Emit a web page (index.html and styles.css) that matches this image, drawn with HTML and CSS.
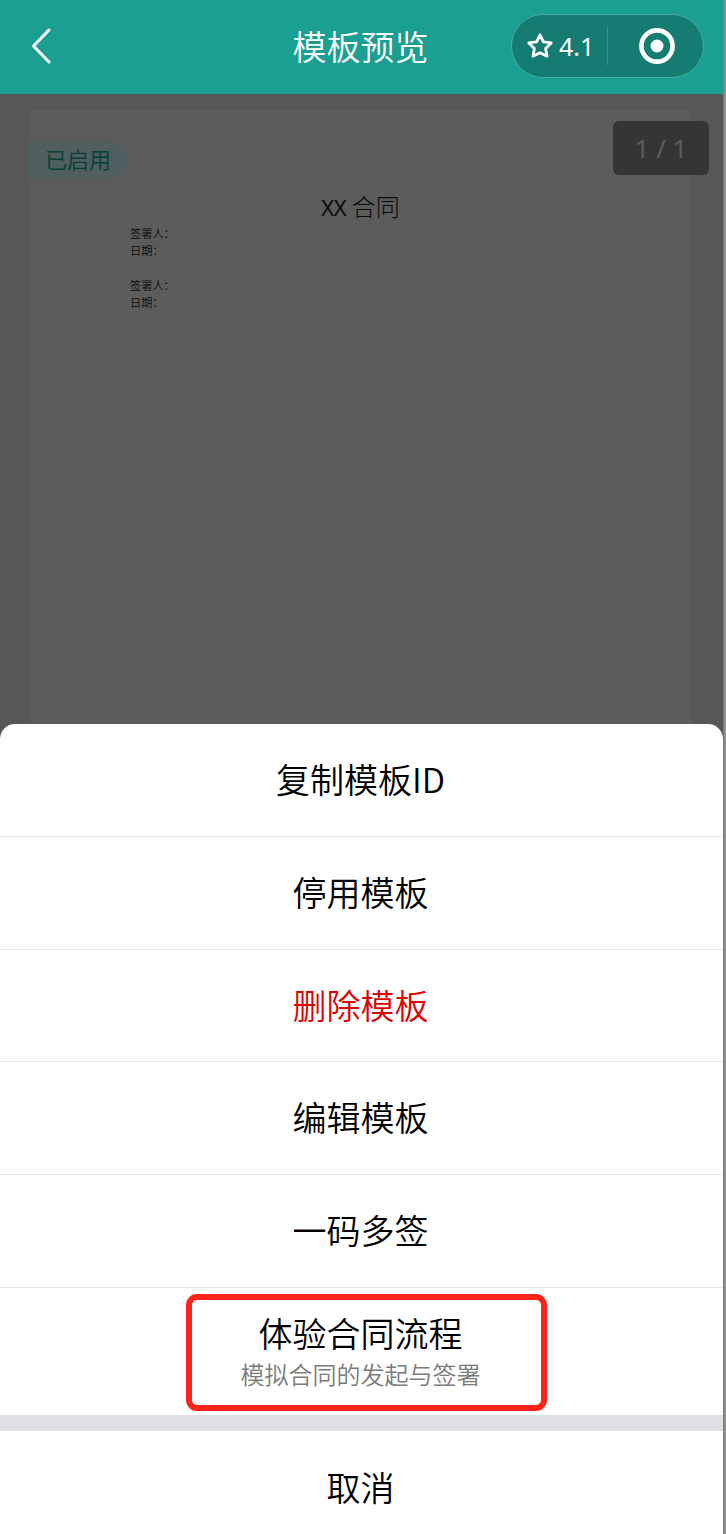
FILE: index.html
```html
<!DOCTYPE html>
<html lang="zh-CN">

<head>
    <meta charset="UTF-8">
    <meta name="viewport" content="width=device-width, initial-scale=1.0">
    <title>模板预览</title>
    <link rel="stylesheet" href="styles.css">
</head>

<body>
    <div class="screen">
        <header class="navbar">
            <svg class="back" width="24" height="38" viewBox="0 0 24 38">
                <path d="M20 3 L4.5 19 L20 35" />
            </svg>
            <h1>模板预览</h1>
            <div class="capsule">
                <div class="rating">
                    <svg width="28" height="28" viewBox="0 0 28 28">
                        <path d="M14 2.8 L17.4 9.9 L25.2 10.9 L19.6 16.4 L21 24.3 L14 20.8 L7 24.3 L8.4 16.4 L2.8 10.9 L10.6 9.9 Z" />
                    </svg>
                    <span>4.1</span>
                </div>
                <div class="close">
                    <svg width="38" height="38" viewBox="0 0 38 38">
                        <circle class="ring" cx="19" cy="19" r="15.6" />
                        <circle class="dot" cx="19" cy="19" r="6.5" />
                    </svg>
                </div>
            </div>
        </header>
        <main class="preview">
            <div class="page">
                <span class="status">已启用</span>
                <h2><span class="latin">XX</span> 合同</h2>
                <div class="sign">
                    <p>签署人：</p>
                    <p>日期：</p>
                </div>
                <div class="sign">
                    <p>签署人：</p>
                    <p>日期：</p>
                </div>
            </div>
            <span class="page-count">1 / 1</span>
        </main>
        <section class="sheet">
            <ul>
                <li>复制模板ID</li>
                <li>停用模板</li>
                <li class="danger">删除模板</li>
                <li>编辑模板</li>
                <li>一码多签</li>
                <li class="trial">
                    <span>体验合同流程</span>
                    <small>模拟合同的发起与签署</small>
                </li>
            </ul>
            <div class="cancel">取消</div>
        </section>
    </div>
</body>

</html>
```

FILE: styles.css
```css
* {
    box-sizing: border-box;
}

body {
    margin: 0;
    background: linear-gradient(to right, #777 723px, #999 726px);
    font-family: "Noto Sans CJK SC", sans-serif;
    font-weight: 350;
}

h1,
h2,
p,
ul {
    margin: 0;
    padding: 0;
    font-weight: inherit;
}

.screen {
    width: 723px;
    height: 1534px;
    display: flex;
    flex-direction: column;
    background-color: #575757;
    overflow: hidden;
}

/* top bar */
.navbar {
    height: 94px;
    flex-shrink: 0;
    display: grid;
    grid-template-columns: 1fr auto 1fr;
    align-items: center;
    padding: 0 19px 2px 29px;
    background-color: #1a9f92;
    color: white;
}

.navbar h1 {
    font-size: 34px;
    line-height: 48px;
    margin-left: -12px;
}

.navbar svg {
    display: block;
    fill: none;
    stroke: white;
}

.back {
    stroke-width: 3;
    stroke-linecap: round;
    stroke-linejoin: round;
}

.capsule {
    justify-self: end;
    width: 193px;
    height: 64px;
    display: flex;
    align-items: center;
    border: 1px solid #43aca1;
    border-radius: 32px;
    background-color: #147c71;
}

.rating {
    width: 96px;
    height: 38px;
    display: flex;
    align-items: center;
    padding-left: 14px;
    gap: 5px;
    border-right: 1px solid #3c958b;
    font: 25px/38px "Noto Sans", sans-serif;
}

.rating svg {
    stroke-width: 2.8;
    stroke-linejoin: round;
}

.close {
    flex: 1;
    display: flex;
    justify-content: center;
    padding-left: 3px;
}

.ring {
    stroke-width: 4.6;
}

.dot {
    fill: white;
    stroke: none;
}

/* document behind the mask */
.preview {
    position: relative;
    height: 630px;
    flex-shrink: 0;
    padding: 16px 32px 0 30px;
}

.page {
    height: 100%;
    padding-top: 31px;
    background-color: #5c5c5c;
    color: #0b0b0b;
}

.status {
    display: block;
    width: 99px;
    height: 38px;
    margin-left: -2px;
    padding-left: 17px;
    border-radius: 0 19px 19px 0;
    background-color: #4e5f5e;
    color: #063f39;
    font-size: 22px;
    line-height: 35px;
}

.page h2 {
    margin: 8px 0 0;
    text-align: center;
    font-size: 24px;
    font-weight: 300;
    line-height: 38px;
}

.latin {
    font: 22px "Noto Sans", sans-serif;
    letter-spacing: -0.4px;
}

.sign {
    margin: 0 0 17px 100px;
    font-size: 11.2px;
    line-height: 17.4px;
}

.page-count {
    position: absolute;
    top: 27px;
    right: 14px;
    width: 96px;
    height: 54px;
    border-radius: 6px;
    background-color: #353535;
    color: #5c5c5c;
    text-align: center;
    font: 26px/54px "Noto Sans", sans-serif;
}

/* action sheet */
.sheet {
    flex: 1;
    border-radius: 15px 15px 0 0;
    background-color: white;
    color: #000;
    text-align: center;
    font-size: 34px;
}

.sheet ul {
    list-style: none;
    border-bottom: 16px solid #dfe0e6;
}

.sheet li {
    height: 112.8px;
    padding-right: 2px;
    border-bottom: 1px solid #e5e5e5;
    line-height: 109px;
}

.sheet .danger {
    color: #e00000;
}

.sheet .trial {
    width: 361px;
    height: 117px;
    margin: 6px 0 4px 186px;
    padding: 13px 12px 0 0;
    border: 6px solid #ff2419;
    border-radius: 11px;
}

.trial span,
.trial small {
    display: block;
}

.trial span {
    line-height: 40px;
}

.trial small {
    color: #7b7b7b;
    font-size: 24px;
    line-height: 41px;
}

.cancel {
    padding-right: 2px;
    line-height: 111px;
}
```
